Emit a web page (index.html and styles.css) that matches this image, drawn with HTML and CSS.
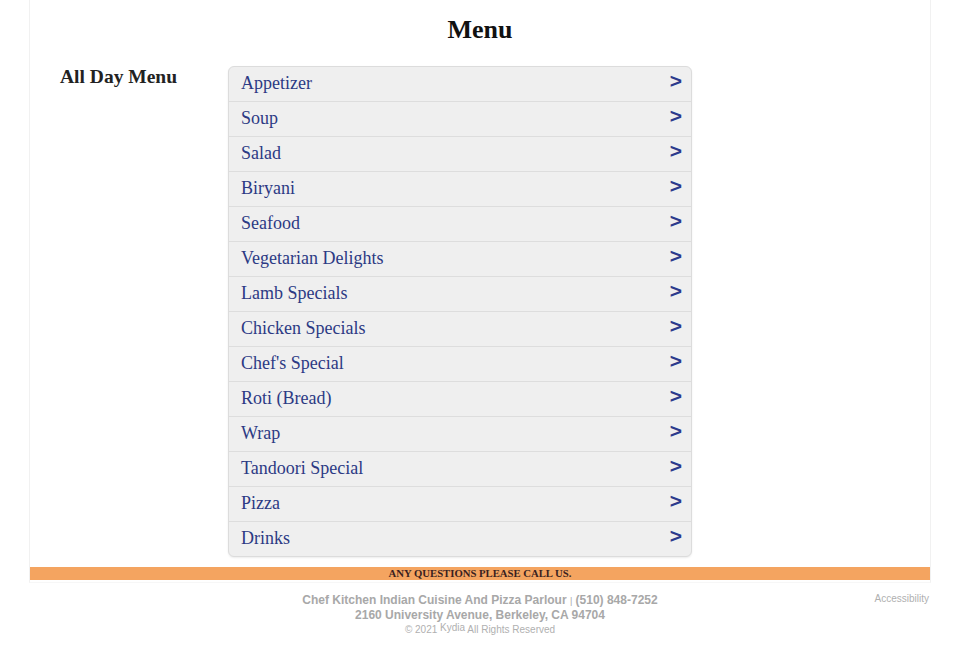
FILE: index.html
```html
<!DOCTYPE html>
<html>
<head>
<meta charset="utf-8">
<link rel="stylesheet" href="styles.css">
</head>
<body>
<div class="page">
  <h1 class="title">Menu</h1>
  <div class="menu-wrap">
    <h2 class="section">All Day Menu</h2>
    <ul class="list">
      <li><span>Appetizer</span><b>&gt;</b></li>
      <li><span>Soup</span><b>&gt;</b></li>
      <li><span>Salad</span><b>&gt;</b></li>
      <li><span>Biryani</span><b>&gt;</b></li>
      <li><span>Seafood</span><b>&gt;</b></li>
      <li><span>Vegetarian Delights</span><b>&gt;</b></li>
      <li><span>Lamb Specials</span><b>&gt;</b></li>
      <li><span>Chicken Specials</span><b>&gt;</b></li>
      <li><span>Chef's Special</span><b>&gt;</b></li>
      <li><span>Roti (Bread)</span><b>&gt;</b></li>
      <li><span>Wrap</span><b>&gt;</b></li>
      <li><span>Tandoori Special</span><b>&gt;</b></li>
      <li><span>Pizza</span><b>&gt;</b></li>
      <li><span>Drinks</span><b>&gt;</b></li>
    </ul>
  </div>
  <div class="callbar">ANY QUESTIONS PLEASE CALL US.</div>
</div>
<footer class="footer">
  <div class="foot-main">
    <div class="line1">Chef Kitchen Indian Cuisine And Pizza Parlour <span class="sep">|</span> (510) 848-7252</div>
    <div class="line2">2160 University Avenue, Berkeley, CA 94704</div>
    <div class="line3">© 2021 <span class="kydia">Kydia</span> All Rights Reserved</div>
  </div>
  <a class="access">Accessibility</a>
</footer>
</body>
</html>
```
FILE: styles.css
```css
html, body {
  margin: 0;
  padding: 0;
  background: #fff;
}
body {
  font-family: "Liberation Serif", "Times New Roman", serif;
}
.page {
  margin-left: 29px;
  width: 900px;
  border-left: 1px solid #f1f1f1;
  border-right: 1px solid #f1f1f1;
  border-bottom: 1px solid #f7f7f7;
  padding-bottom: 2px;
}
.title {
  margin: 0;
  padding-top: 15px;
  height: 66px;
  box-sizing: border-box;
  font-size: 26px;
  line-height: 30px;
  font-weight: bold;
  text-align: center;
  color: #111;
}
.menu-wrap {
  display: flex;
  align-items: flex-start;
  padding-left: 30px;
  margin-bottom: 10px;
}
.section {
  margin: 0;
  width: 168px;
  flex: none;
  font-size: 19.5px;
  line-height: 22px;
  padding-top: 0;
  font-weight: bold;
  color: #222;
}
.list {
  list-style: none;
  margin: 0;
  padding: 0;
  width: 462px;
  border: 1px solid #dcdcdc;
  border-radius: 6px;
  background: #efefef;
  box-shadow: 0 1px 2px rgba(0,0,0,0.08);
}
.list li {
  display: flex;
  justify-content: space-between;
  height: 34px;
  border-top: 1px solid #dddddd;
  padding: 0 9px 0 12px;
}
.list li:first-child {
  border-top: none;
}
.list span {
  font-size: 18px;
  line-height: 32px;
  padding-top: 0;
  color: #2c3a84;
}
.list b {
  font-family: "Liberation Sans", Arial, sans-serif;
  font-size: 21px;
  line-height: 27px;
  font-weight: bold;
  color: #2c3a8c;
}
.callbar {
  background: #f4a460;
  height: 13px;
  line-height: 13px;
  text-align: center;
  font-size: 10.7px;
  font-weight: bold;
  color: #3a1f1f;
}
.footer {
  position: relative;
  font-family: "Liberation Sans", Arial, sans-serif;
  color: #a8a8a8;
  text-align: center;
  padding-top: 10px;
}
.line1, .line2 {
  font-size: 12px;
  line-height: 14px;
  font-weight: bold;
}
.sep {
  font-size: 9px;
  font-weight: normal;
}
.line3 {
  font-size: 10px;
  line-height: 14px;
  margin-top: 1px;
  color: #b0b0b0;
}
.kydia {
  position: relative;
  top: -2px;
}
.access {
  position: absolute;
  right: 31px;
  top: 10px;
  font-size: 10px;
  color: #b0b0b0;
}
```
